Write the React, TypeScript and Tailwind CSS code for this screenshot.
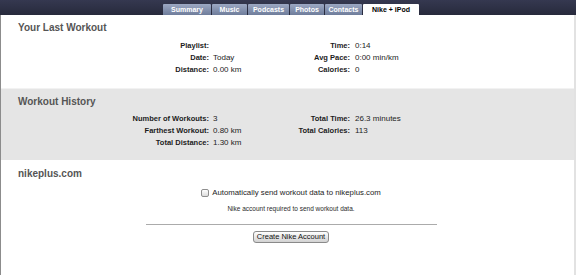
const TABS = [
  { label: 'Summary', w: 'w-[48px]' },
  { label: 'Music', w: 'w-[35px]' },
  { label: 'Podcasts', w: 'w-[41px]' },
  { label: 'Photos', w: 'w-[34px]' },
  { label: 'Contacts', w: 'w-[37px]' },
]

type Row = [string, string]

const LAST_LEFT: Row[] = [['Playlist:', ''], ['Date:', 'Today'], ['Distance:', '0.00 km']]
const LAST_RIGHT: Row[] = [['Time:', '0:14'], ['Avg Pace:', '0:00 min/km'], ['Calories:', '0']]
const HIST_LEFT: Row[] = [['Number of Workouts:', '3'], ['Farthest Workout:', '0.80 km'], ['Total Distance:', '1.30 km']]
const HIST_RIGHT: Row[] = [['Total Time:', '26.3 minutes'], ['Total Calories:', '113']]

function Stats({ left, right }: { left: Row[]; right: Row[] }) {
  return (
    <div className="flex leading-[12px] text-[#1c1c1c]">
      <div className="grid grid-cols-[208px_auto] gap-x-[4px] w-[279px] content-start">
        {left.map(([k, v]) => (
          <div key={k} className="contents">
            <span className="text-right font-bold text-[7.5px]">{k}</span>
            <span className="text-[8px]">{v}</span>
          </div>
        ))}
      </div>
      <div className="grid grid-cols-[70px_auto] gap-x-[5px] content-start">
        {right.map(([k, v]) => (
          <div key={k} className="contents">
            <span className="text-right font-bold text-[7.5px] whitespace-nowrap">{k}</span>
            <span className="text-[8px]">{v}</span>
          </div>
        ))}
      </div>
    </div>
  )
}

function Heading({ children }: { children: string }) {
  return <h2 className="pl-[17px] text-[10px] leading-[12px] font-bold text-[#555555]">{children}</h2>
}

export default function App() {
  return (
    <div className="w-[576px] h-[275px] bg-white overflow-hidden font-['Liberation_Sans',Arial,sans-serif]">
      {/* Tab bar */}
      <div className="h-[15px] bg-linear-to-b from-[#353850] to-[#272a3c]">
        <div className="w-[570px] ml-[6px] flex justify-center items-end h-[15px] pt-[4px] gap-px">
          {TABS.map(t => (
            <div
              key={t.label}
              className={`${t.w} h-[11px] rounded-t-[1px] bg-linear-to-b from-[#9ca8c3] to-[#6f7d9b] text-white text-[7px] font-bold leading-[11px] text-center`}
            >
              {t.label}
            </div>
          ))}
          <div className="w-[56px] h-[11px] bg-white text-black text-[7px] font-bold leading-[11px] text-center rounded-t-[1px]">
            Nike + iPod
          </div>
        </div>
      </div>

      <div className="border-l border-[#8c8c8c] border-r-[2px] border-r-[#e2e2e2] h-[260px]">
        {/* Your Last Workout */}
        <section className="pt-[7px] h-[73px]">
          <Heading>Your Last Workout</Heading>
          <div className="mt-[6px]">
            <Stats left={LAST_LEFT} right={LAST_RIGHT} />
          </div>
        </section>

        {/* Workout History */}
        <section className="bg-[#e5e5e5] border-t border-[#f2f2f2] pt-[7px] h-[72px]">
          <Heading>Workout History</Heading>
          <div className="mt-[5px]">
            <Stats left={HIST_LEFT} right={HIST_RIGHT} />
          </div>
        </section>

        {/* nikeplus.com */}
        <section className="pt-[8px]">
          <Heading>nikeplus.com</Heading>
          <div className="w-[570px] ml-[5px] flex flex-col items-center">
            <label className="mt-[7px] flex items-center gap-[3px] h-[12px] text-[7.8px] text-[#1c1c1c]">
              <span className="w-[8px] h-[8px] rounded-[2px] border border-[#8e8e8e] bg-linear-to-b from-white to-[#dcdcdc]" />
              Automatically send workout data to nikeplus.com
            </label>
            <p className="mt-[5px] text-[6.5px] leading-[10px] text-[#2a2a2a]">
              Nike account required to send workout data.
            </p>
            <div className="mt-[10px] w-[291px] border-t border-[#ababab]" />
            <button className="mt-[6px] h-[12px] w-[76px] rounded-[3px] border border-[#8a8a8a] bg-linear-to-b from-white to-[#d2d2d2] text-[7.5px] leading-[10px] text-[#111]">
              Create Nike Account
            </button>
          </div>
        </section>
      </div>
    </div>
  )
}
